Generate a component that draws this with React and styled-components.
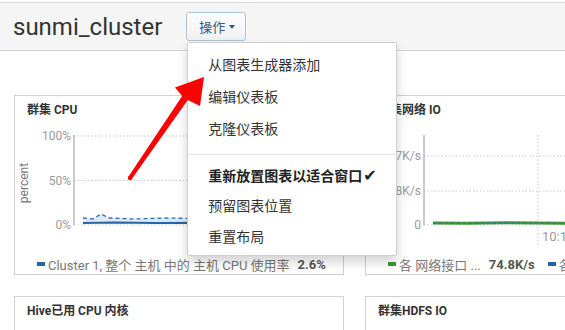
import React from "react";
import styled, { createGlobalStyle } from "styled-components";

// --- Global ---

const GlobalStyle = createGlobalStyle`
  html, body { margin: 0; padding: 0; background: #fff; overflow: hidden; }
  body { font-family: Roboto, "Noto Sans CJK SC", sans-serif; }
  * { box-sizing: border-box; }
`;

// --- Styled Components ---

const Page = styled.div`
  position: relative;
  width: 565px;
  height: 330px;
  padding-top: 2px;
  overflow: hidden;
`;

const Header = styled.header`
  display: flex;
  align-items: center;
  gap: 24px;
  height: 49px;
  padding-left: 13px;
  background: #f5f5f5;
  border-top: 1px solid #d8d8d8;
  border-bottom: 1px solid #d2d2d2;
`;

const Title = styled.h1`
  margin: 0;
  font-size: 24px;
  font-weight: 400;
  color: #333;
  line-height: 28px;
`;

const ActionWrap = styled.div`
  position: relative;
`;

const ActionButton = styled.button`
  display: flex;
  align-items: center;
  gap: 4px;
  height: 29px;
  padding: 0 10px 0 12px;
  border: 1px solid #a9c5dc;
  border-radius: 3px;
  background: linear-gradient(#fdfdfd, #f1f1f1);
  color: #2c5d87;
  font-family: Roboto, "Noto Sans CJK SC", sans-serif;
  font-size: 13px;
  cursor: pointer;
`;

const Caret = styled.span`
  width: 0;
  height: 0;
  border-left: 3.5px solid transparent;
  border-right: 3.5px solid transparent;
  border-top: 4px solid currentColor;
`;

const Menu = styled.ul`
  position: absolute;
  top: calc(100% + 1px);
  left: 1px;
  z-index: 10;
  width: 210px;
  margin: 0;
  padding: 6px 0 2px;
  list-style: none;
  background: #fff;
  border: 1px solid #cfcfcf;
  border-radius: 2px;
  box-shadow: 0 6px 12px rgba(0, 0, 0, 0.18);
`;

const MenuItem = styled.li`
  height: ${p => (p.$tight ? 31 : 32)}px;
  line-height: ${p => (p.$tight ? 31 : 32)}px;
  padding: 0 20px;
  font-size: 14px;
  white-space: nowrap;
  color: ${p => (p.$active ? "#222" : "#333")};
  font-weight: ${p => (p.$active ? 700 : 400)};
`;

const Check = styled.span`
  font-family: "DejaVu Sans", sans-serif;
  font-size: 16px;
  margin-left: 1px;
`;

const Divider = styled.li`
  height: 1px;
  margin: 9px 0 5px;
  background: #e3e3e3;
`;

const Grid = styled.main`
  display: grid;
  grid-template-columns: 330px 330px;
  grid-auto-rows: 180px;
  gap: 21px;
  padding: 44px 0 0 14px;
`;

const Card = styled.section`
  display: flex;
  flex-direction: column;
  border: 1px solid #d0d0d0;
  background: #fff;
`;

const CardTitle = styled.h3`
  margin: 0;
  height: 22px;
  padding: 6px 12px 0;
  font-size: 12px;
  line-height: 16px;
  font-weight: 700;
  color: #333;
  white-space: nowrap;
`;

const ChartSvg = styled.svg`
  display: block;
  width: 328px;
  height: 137px;
  font-family: Roboto, sans-serif;
`;

const Legend = styled.div`
  display: flex;
  align-items: center;
  height: 18px;
  padding-left: 22px;
  font-size: 13px;
  color: #777;
  white-space: nowrap;
`;

const Swatch = styled.span`
  display: inline-block;
  width: 8px;
  height: 4px;
  margin-right: 3px;
  background: ${p => p.color};
`;

const Value = styled.b`
  margin-left: 8px;
  margin-right: 13px;
  color: #555;
`;

const ArrowLayer = styled.svg`
  position: absolute;
  top: 0;
  left: 0;
  z-index: 20;
  pointer-events: none;
`;

// --- Chart ---

function TimeChart({ axisX, ticks, children }) {
  return (
    <ChartSvg viewBox="0 0 328 137">
      {ticks.map(t => (
        <g key={t.label}>
          <line x1={axisX} x2="328" y1={t.y} y2={t.y} stroke="#c8c8c8" strokeDasharray="1.5 2" />
          <text x={axisX - 3} y={t.y + 4} textAnchor="end" fontSize="12" fill="#9a9a9a">{t.label}</text>
        </g>
      ))}
      <line x1={axisX + 114} x2={axisX + 114} y1="17" y2="127" stroke="#c8c8c8" strokeDasharray="1.5 2" />
      <text x={axisX + 118} y="123" fontSize="13" fill="#9a9a9a">10:15</text>
      {children}
      <line x1={axisX} x2={axisX} y1="17" y2="107" stroke="#999" />
    </ChartSvg>
  );
}

// --- Component ---

export default function App() {
  return (
    <Page>
      <GlobalStyle />
      <Header>
        <Title>sunmi_cluster</Title>
        <ActionWrap>
          <ActionButton>操作<Caret /></ActionButton>
          <Menu>
            <MenuItem>从图表生成器添加</MenuItem>
            <MenuItem>编辑仪表板</MenuItem>
            <MenuItem>克隆仪表板</MenuItem>
            <Divider />
            <MenuItem $active $tight>重新放置图表以适合窗口<Check>✔</Check></MenuItem>
            <MenuItem $tight>预留图表位置</MenuItem>
            <MenuItem $tight>重置布局</MenuItem>
          </Menu>
        </ActionWrap>
      </Header>

      <Grid>
        <Card>
          <CardTitle>群集 CPU</CardTitle>
          <TimeChart axisX={59} ticks={[{ label: "100%", y: 18 }, { label: "50%", y: 62.5 }, { label: "0%", y: 107 }]}>
            <text transform="translate(13 65) rotate(-90)" textAnchor="middle" fontSize="12" fill="#777">percent</text>
            <path d="M68,100 L78,101 L86,96 L94,100 L120,101 L150,100 L180,100.5 L220,100 L260,101 L328,100 L328,105 L68,105 Z" fill="#dfe9f4" />
            <path d="M68,100 L78,101 L86,96 L94,100 L120,101 L150,100 L180,100.5 L220,100 L260,101 L328,100" fill="none" stroke="#2f6db0" strokeWidth="1.3" strokeDasharray="4 3" />
            <path d="M68,105 L100,104.5 L140,105 L200,104.8 L328,105" fill="none" stroke="#2464a8" strokeWidth="2.2" />
          </TimeChart>
          <Legend>
            <Swatch color="#2464a8" />
            Cluster 1, 整个 主机 中的 主机 CPU 使用率
            <Value>2.6%</Value>
          </Legend>
        </Card>

        <Card>
          <CardTitle>群集网络 IO</CardTitle>
          <TimeChart axisX={58} ticks={[{ label: "77K/s", y: 38 }, { label: "38K/s", y: 73 }, { label: "0", y: 107 }]}>
            <path d="M67,105 L100,105.3 L140,104.7 L200,105.2 L328,105" fill="none" stroke="#3c9a33" strokeWidth="3" />
            <path d="M67,105 L100,105.3 L140,104.7 L200,105.2 L328,105" fill="none" stroke="#2a6ab0" strokeWidth="0.8" strokeDasharray="3 3" />
          </TimeChart>
          <Legend>
            <Swatch color="#3c9a33" />
            各 网络接口 ...
            <Value>74.8K/s</Value>
            <Swatch color="#2464a8" />
            各 网络接口 ...
          </Legend>
        </Card>

        <Card>
          <CardTitle>Hive已用 CPU 内核</CardTitle>
        </Card>

        <Card>
          <CardTitle>群集HDFS IO</CardTitle>
        </Card>
      </Grid>

      <ArrowLayer width="565" height="330" viewBox="0 0 565 330">
        <path d="M128.4,176.8 L182.2,96 L175,87.5 L204,77 L200,106 L187.8,100 L131.6,179.2 Z" fill="#ff0000" />
        <circle cx="130" cy="178" r="2.2" fill="#ff0000" />
      </ArrowLayer>
    </Page>
  );
}
